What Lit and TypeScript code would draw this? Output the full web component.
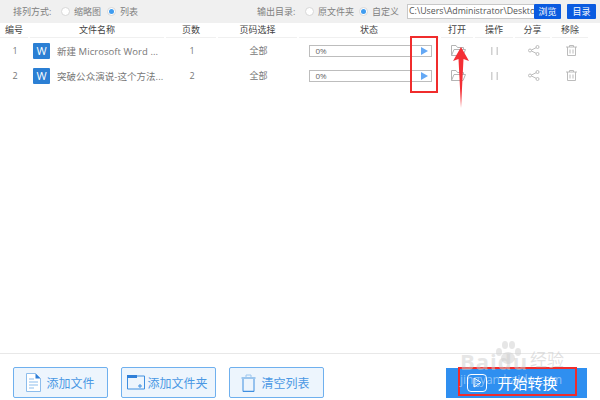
import { LitElement, html, css, svg } from "lit";
import { customElement } from "lit/decorators.js";

const folder = svg`<svg width="15" height="11" viewBox="0 0 15 11" fill="none" stroke="#b4b4b4" stroke-width="1"><path d="M.5 10.500V.5h4.500l1.500 2H12.500v2"/><path d="M.5 10.500l2.500-6h11.500l-2.500 6z"/></svg>`;
const pause = svg`<svg width="8" height="8" viewBox="0 0 8 8" fill="#d0d0d0"><rect x="0" y="0" width="1.500" height="8"/><rect x="5.500" y="0" width="1.500" height="8"/></svg>`;
const share = svg`<svg width="12" height="11" viewBox="0 0 12 11" fill="none" stroke="#b4b4b4" stroke-width=".9"><circle cx="2" cy="5.500" r="1.500"/><circle cx="9.500" cy="2" r="1.500"/><circle cx="9.500" cy="9" r="1.500"/><path d="M3.500 5l4.600-2.300M3.500 6l4.600 2.300"/></svg>`;
const trash = svg`<svg width="11" height="11" viewBox="0 0 11 11" fill="none" stroke="#b4b4b4" stroke-width=".9"><path d="M0 2h11M3.500 2V.5h4V2M1.500 2v8.500h8V2M4 4.500v4M7 4.500v4"/></svg>`;

const rows = [
  { n: "1", name: "新建 Microsoft Word ...", pages: "1" },
  { n: "2", name: "突破公众演说-这个方法...", pages: "2" },
];

@customElement("app-root")
export class AppRoot extends LitElement {
  static styles = css`
    :host { display: block; width: 600px; height: 400px; position: relative; overflow: hidden; background: #fff; font-family: "Open Sans", "Noto Sans CJK SC", sans-serif; color: #666; font-size: 9px; }
    .top { height: 23px; background: #f0f0f0; display: flex; align-items: center; padding-left: 13px; box-sizing: border-box; color: #808080; white-space: nowrap; }
    .radio { width: 7px; height: 7px; border-radius: 50%; background: #fff; border: 1px solid #d8d8d8; display: inline-flex; align-items: center; justify-content: center; flex: none; }
    .radio.on::after { content: ""; width: 5px; height: 5px; border-radius: 50%; background: #3f9cf0; }
    .lbl { margin-left: 4px; }
    .sort { width: 48px; flex: none; }
    .r-b { margin-left: 6px; }
    .out { margin-left: 119px; width: 48px; flex: none; }
    .r-d { margin-left: 5px; }
    .path { width: 127px; height: 15px; margin-left: 8px; flex: none; box-sizing: border-box; background: #fff; border: 1px solid #c8c8c8; border-right: 0; color: #555; font-size: 8.800px; line-height: 13px; padding-left: 1px; overflow: hidden; }
    .blue { background: #0a5be0; color: #fff; height: 15px; line-height: 15px; text-align: center; border-radius: 1px; flex: none; }
    .browse { width: 27px; }
    .dir { width: 29px; margin-left: 6px; }
    .grid { display: grid; grid-template-columns: 30px 136px 52px 81px 142px 34px 40px 37px 38px; align-items: center; text-align: center; }
    .head { height: 15px; color: #444; line-height: 15px; }
    .head > div { border-bottom: 1px solid #f0f0f0; height: 14px; margin-right: 2px; line-height: 14px; }
    .row { height: 25px; color: #777; }
    .row > div { display: flex; align-items: center; justify-content: center; }
    .rows { height: 316px; box-sizing: border-box; border-bottom: 1px solid #e8e8e8; }
    .file { justify-content: flex-start !important; padding-left: 3px; white-space: nowrap; }
    .w { width: 17px; height: 16px; background: #2b7fd4; color: #fff; font-size: 11px; display: flex; align-items: center; justify-content: center; margin-right: 7px; flex: none; border-radius: 1px; }
    .fname { font-size: 9.500px; letter-spacing: .05px; }
    .bar { width: 123px; height: 12px; box-sizing: border-box; border: 1px solid #bdbdbd; border-bottom-width: 1.500px; display: flex; align-items: center; justify-content: space-between; padding: 0 3px 0 6px; font-size: 8px; color: #666; }
    .tri { width: 0; height: 0; border-left: 7px solid #64a8f5; border-top: 4px solid transparent; border-bottom: 4px solid transparent; }
    .foot { display: flex; align-items: center; padding: 13px 13px 0; }
    .btn { height: 31px; width: 95px; flex: none; box-sizing: border-box; border: 1px solid #6fb0ee; background: #edf5fd; border-radius: 2px; display: flex; align-items: center; justify-content: center; gap: 5px; color: #4a98e4; font-size: 12px; }
    .b1 { margin-right: 13px; }
    .b2 { margin-right: 13px; gap: 2px; padding-right: 2px; }
    .b3 { gap: 5px; padding-right: 2px; }
    .start { width: 141px; height: 30px; margin-left: 122px; flex: none; background: #2f8ff0; color: #fff; font-size: 15px; display: flex; align-items: center; justify-content: center; gap: 10px; padding-right: 8px; box-sizing: border-box; }
    .playbox { width: 20px; height: 18px; border: 1.500px solid #fff; border-radius: 4px; box-sizing: border-box; display: flex; align-items: center; justify-content: center; }
    .redbox { position: absolute; border: 2px solid #f02c2c; box-sizing: border-box; }
    .r1 { left: 410px; top: 36px; width: 28px; height: 57px; }
    .r2 { left: 458px; top: 367px; width: 119px; height: 29px; }
    .arrow { position: absolute; left: 452px; top: 47px; }
    .wm { position: absolute; left: 460px; top: 340px; width: 110px; height: 50px; pointer-events: none; }
    .paw { position: absolute; left: 33px; top: 0; }
    .baidu { position: absolute; left: 0; top: 8px; font-size: 22px; font-weight: 700; line-height: 26px; color: rgba(205,205,205,.5); letter-spacing: 1px; }
    .jy { position: absolute; left: 70px; top: 10px; font-size: 17px; line-height: 20px; color: rgba(205,205,205,.6); white-space: nowrap; }
    .url { position: absolute; left: 0; top: 32px; font-size: 12px; line-height: 16px; color: rgba(255,255,255,.45); white-space: nowrap; }
  `;

  render() {
    return html`
      <div class="top">
        <span class="sort">排列方式:</span>
        <span class="radio"></span><span class="lbl">缩略图</span>
        <span class="radio on r-b"></span><span class="lbl">列表</span>
        <span class="out">输出目录:</span>
        <span class="radio"></span><span class="lbl">原文件夹</span>
        <span class="radio on r-d"></span><span class="lbl">自定义</span>
        <div class="path">C:\\Users\\Administrator\\Deskto</div>
        <div class="blue browse">浏览</div>
        <div class="blue dir">目录</div>
      </div>
      <div class="grid head">
        ${["编号", "文件名称", "页数", "页码选择", "状态", "打开", "操作", "分享", "移除"].map((h) => html`<div>${h}</div>`)}
      </div>
      <div class="rows">
        ${rows.map(
          (r) => html`<div class="grid row">
            <div>${r.n}</div>
            <div class="file"><span class="w">W</span><span class="fname">${r.name}</span></div>
            <div>${r.pages}</div>
            <div>全部</div>
            <div><div class="bar"><span>0%</span><span class="tri"></span></div></div>
            <div>${folder}</div>
            <div>${pause}</div>
            <div>${share}</div>
            <div>${trash}</div>
          </div>`
        )}
      </div>
      <div class="foot">
        <div class="btn b1">
          <svg width="15" height="19" viewBox="0 0 15 19" fill="#fff" stroke="#8dbdec"><path d="M.5.5h9l5 5v13H.5z"/><path d="M3 6h5M3 9h9M3 12h9M3 15h5"/><path d="M9.500.5v5h5z" fill="#2f7fd8" stroke="none"/></svg>
          <span>添加文件</span>
        </div>
        <div class="btn b2">
          <svg width="18" height="15" viewBox="0 0 18 15" fill="none" stroke="#3f8fe0"><path d="M.5 1h17v13H.5z"/><rect x="0" y="0" width="10" height="3" fill="#2f7fd8" stroke="none"/><path d="M11 11h4M13 9v4"/></svg>
          <span>添加文件夹</span>
        </div>
        <div class="btn b3">
          <svg width="15" height="18" viewBox="0 0 15 18" fill="none" stroke="#3f8fe0"><path d="M.5 4h14" stroke="#9cc6ee" stroke-width="2"/><path d="M5 3V1h5v2" stroke="#9cc6ee"/><path d="M2 5v12.500h11V5"/><path d="M2 17.500h11" stroke-width="1.500"/></svg>
          <span>清空列表</span>
        </div>
        <div class="start">
          <span class="playbox"><svg width="9" height="11" viewBox="0 0 9 11" fill="none" stroke="#fff"><path d="M1 1l7 4.500-7 4.500z"/></svg></span>
          <span>开始转换</span>
        </div>
      </div>

      <div class="redbox r1"></div>
      <div class="redbox r2"></div>
      <svg class="arrow" width="18" height="62" viewBox="0 0 18 62"><path d="M9 0L17 14L11.500 12L9 61L6.500 12L1 14z" fill="#f42f35"/></svg>
      <div class="wm">
        <svg class="paw" width="30" height="26" viewBox="0 0 30 26" fill="rgba(205,205,205,.5)"><ellipse cx="15" cy="18" rx="7" ry="6"/><ellipse cx="6" cy="12" rx="3" ry="4"/><ellipse cx="12" cy="5" rx="3" ry="4"/><ellipse cx="19" cy="5" rx="3" ry="4"/><ellipse cx="25" cy="12" rx="3" ry="4"/></svg>
        <div class="baidu">Baidu</div>
        <div class="jy">经验</div>
        <div class="url">jingyan.baidu.com</div>
      </div>
    `;
  }
}
